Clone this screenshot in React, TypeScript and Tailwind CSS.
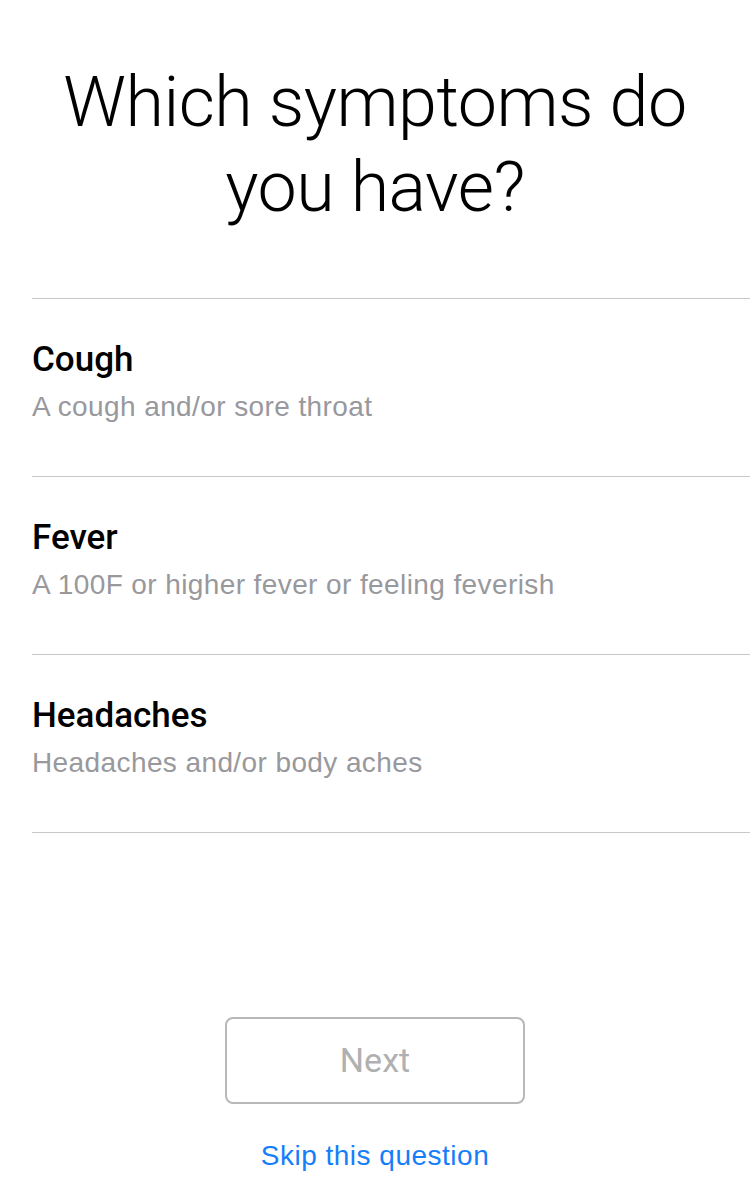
const symptoms = [
  { name: 'Cough', detail: 'A cough and/or sore throat' },
  { name: 'Fever', detail: 'A 100F or higher fever or feeling feverish' },
  { name: 'Headaches', detail: 'Headaches and/or body aches' },
];

export default function App() {
  return (
    <div className="min-h-[1198px] w-[750px] bg-white font-['Roboto',sans-serif] text-black">
      <h1 className="pt-[60px] text-center text-[70px] font-light leading-[85px] tracking-[-0.5px]">
        Which symptoms do
        <br />
        you have?
      </h1>

      <ul className="ml-[32px] mt-[68px] border-t border-[#c8c7cc]">
        {symptoms.map((s) => (
          <li key={s.name} className="h-[178px] border-b border-[#c8c7cc] pt-[41px]">
            <div className="text-[35px] font-medium leading-[40px]">{s.name}</div>
            <div className="mt-[10px] font-['Liberation_Sans',sans-serif] text-[28px] leading-[34px] tracking-[0.4px] text-[#98989d]">
              {s.detail}
            </div>
          </li>
        ))}
      </ul>

      <div className="mt-[184px] flex flex-col items-center">
        <button className="h-[87px] w-[300px] rounded-[8px] border-2 border-[#b8b8b8] text-[34px] text-[#b0b0b0]">
          Next
        </button>
        <a className="mt-[32px] font-['Liberation_Sans',sans-serif] text-[28px] leading-[40px] tracking-[0.5px] text-[#147efb]">
          Skip this question
        </a>
      </div>
    </div>
  );
}
